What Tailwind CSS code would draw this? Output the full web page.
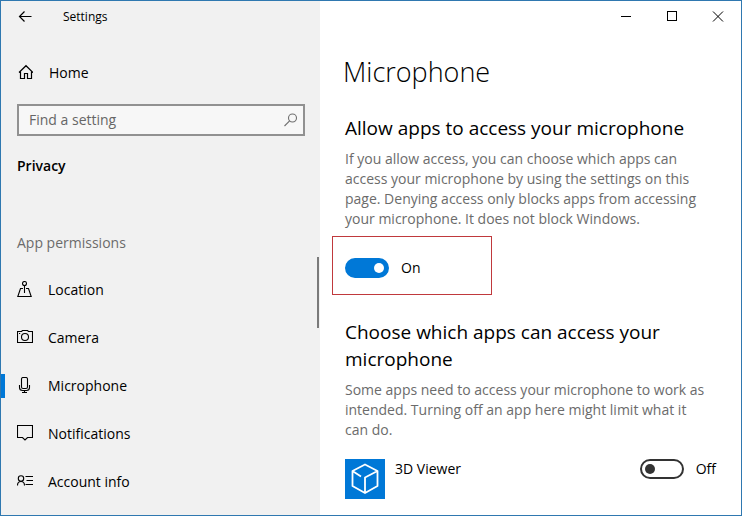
<!DOCTYPE html>
<html lang="en">

<head>
    <meta charset="UTF-8">
    <meta name="viewport" content="width=device-width, initial-scale=1.0">
    <title>Settings</title>
    <script src="https://cdn.jsdelivr.net/npm/@tailwindcss/browser@4"></script>
</head>

<body class="font-['Open_Sans','Noto_Sans',sans-serif] text-[14px] leading-5 text-black">
    <div class="flex min-h-screen border border-[#2f78b0] bg-white">
        <!-- sidebar -->
        <aside class="flex w-[319px] shrink-0 flex-col bg-[#f1f1f1]">
            <header class="flex h-[31px] items-center gap-[30px] pl-4 text-[12px]">
                <button type="button" aria-label="Back">
                    <svg class="h-4 w-4" viewBox="0 0 16 16" fill="none" stroke="currentColor" stroke-width="1.2">
                        <path d="M14.500 7.500H3M7.500 2.500L2.500 7.500L7.500 12.500" />
                    </svg>
                </button>
                <span>Settings</span>
            </header>

            <a href="#home" class="mt-4 flex h-12 items-center gap-4 pl-4 pt-px">
                <svg class="mb-[2px] h-4 w-4" viewBox="0 0 16 16" fill="none" stroke="currentColor" stroke-width="1.2">
                    <path d="M2 8.500L9 1.700L16 8.500M3.500 7V14.500H7.500V9.500H10.500V14.500H14.500V7" />
                </svg>
                Home
            </a>

            <div class="ml-4 mr-[15px] mt-2 flex h-8 items-center border-2 border-[#919191] bg-[#f7f7f7] pl-[10px] pr-1">
                <input type="text" id="search" aria-label="Find a setting" placeholder="Find a setting"
                    class="min-w-0 flex-1 bg-transparent outline-none placeholder:text-[#666666]">
                <svg class="h-4 w-4" viewBox="0 0 16 16" fill="none" stroke="#6f6f6f" stroke-width="1.1">
                    <circle cx="9.500" cy="6" r="4" />
                    <path d="M6.600 8.900L1.500 14" />
                </svg>
            </div>

            <h2 class="mt-4 pl-4 font-semibold leading-7">Privacy</h2>
            <h3 class="mt-[49px] pl-4 leading-7 text-[#6b6b6b]">App permissions</h3>

            <div class="mt-2 flex">
                <nav class="flex-1 pt-px">
                    <a href="#location" class="flex h-12 items-center gap-[15px] pl-4">
                        <svg class="mb-[2px] h-4 w-4" viewBox="0 0 16 16" fill="none" stroke="currentColor" stroke-width="1.1">
                            <circle cx="7.500" cy="2.500" r="2" />
                            <path d="M7.500 4.500V12M6 7.500H3.500L.8 15.500H14.200L11.500 7.500H9" />
                        </svg>
                        Location
                    </a>
                    <a href="#camera" class="flex h-12 items-center gap-[15px] pl-4">
                        <svg class="mb-[2px] h-4 w-4" viewBox="0 0 16 16" fill="none" stroke="currentColor" stroke-width="1.1">
                            <path d="M.5 2.500H4.500L5.500 1.500H10.500L11.500 2.500H15.500V13.500H.5Z" />
                            <circle cx="8" cy="8" r="3.500" />
                            <path d="M2 4.500H3.200" />
                        </svg>
                        Camera
                    </a>
                    <a href="#microphone" aria-current="page" class="relative flex h-12 items-center gap-[15px] pl-4">
                        <span class="absolute left-0 h-6 w-1 bg-[#0078d7]"></span>
                        <svg class="mb-[2px] h-4 w-4" viewBox="0 0 16 16" fill="none" stroke="currentColor" stroke-width="1.1">
                            <rect x="4.500" y=".5" width="6" height="11" rx="1.500" />
                            <path d="M2.500 8V10.500Q2.500 13.500 5.500 13.500H9.500Q12.500 13.500 12.500 10.500V8M7.500 13.500V15.500M5 15.500H10" />
                        </svg>
                        Microphone
                    </a>
                    <a href="#notifications" class="flex h-12 items-center gap-[15px] pl-4">
                        <svg class="mb-[2px] h-4 w-4" viewBox="0 0 16 16" fill="none" stroke="currentColor" stroke-width="1.1">
                            <path d="M.5 .5H15.500V12.500H10.500L8 15L5.500 12.500H.5Z" />
                        </svg>
                        Notifications
                    </a>
                    <a href="#account" class="flex h-12 items-center gap-[15px] pl-4">
                        <svg class="mb-[2px] h-4 w-4" viewBox="0 0 16 16" fill="none" stroke="currentColor" stroke-width="1.1">
                            <circle cx="4" cy="5.500" r="2.700" />
                            <path d="M.5 12.500Q.5 8.500 4 8.500T7.500 12.500M8.500 3.500H16M9.500 7.500H16M8.500 11.500H16" />
                        </svg>
                        Account info
                    </a>
                </nav>
                <!-- scroll thumb, starts beside the section title -->
                <div class="-mt-2 mr-px h-[71px] w-[2px] bg-[#7a7a7a]"></div>
            </div>
        </aside>

        <!-- content -->
        <main class="min-w-0 flex-1 pl-[25px]">
            <div class="flex h-[31px] items-center justify-end">
                <button type="button" aria-label="Minimize" class="flex h-full w-[46px] items-center justify-center">
                    <svg class="h-3 w-3" viewBox="0 0 12 12" fill="none" stroke="currentColor">
                        <path d="M1 5.500H11" />
                    </svg>
                </button>
                <button type="button" aria-label="Maximize" class="flex h-full w-[46px] items-center justify-center">
                    <svg class="h-3 w-3" viewBox="0 0 12 12" fill="none" stroke="currentColor">
                        <rect x="1.500" y=".5" width="9" height="9" />
                    </svg>
                </button>
                <button type="button" aria-label="Close" class="flex h-full w-[46px] items-center justify-center">
                    <svg class="h-3 w-3" viewBox="0 0 12 12" fill="none" stroke="currentColor">
                        <path d="M1 .5L11 10.500M11 .5L1 10.500" />
                    </svg>
                </button>
            </div>

            <h1 class="-ml-[2px] mt-5 text-[27px] font-light leading-10">Microphone</h1>

            <section class="mt-[23px]">
                <h2 class="text-[19px] leading-[27px]">Allow apps to access your microphone</h2>
                <p class="mt-[7px] text-[#6b6b6b]">
                    If you allow access, you can choose which apps can<br>
                    access your microphone by using the settings on this<br>
                    page. Denying access only blocks apps from accessing<br>
                    your microphone. It does not block Windows.
                </p>
                <div class="-ml-[13px] mt-[7px] flex h-[59px] w-40 items-center border border-[#c0393d] pl-3 pt-1">
                    <label class="flex items-center gap-3">
                        <input type="checkbox" role="switch" checked
                            class="flex h-5 w-11 appearance-none items-center rounded-full border-2 border-[#333333] px-[3px] before:h-[10px] before:w-[10px] before:rounded-full before:bg-[#333333] checked:justify-end checked:border-[#0078d7] checked:bg-[#0078d7] checked:before:bg-white">
                        On
                    </label>
                </div>
            </section>

            <section class="mt-6">
                <h2 class="text-[19px] leading-[27px]">Choose which apps can access your<br>microphone</h2>
                <p class="mt-[7px] text-[#6b6b6b]">
                    Some apps need to access your microphone to work as<br>
                    intended. Turning off an app here might limit what it<br>
                    can do.
                </p>
                <div class="mt-[19px] flex items-start pr-[25px]">
                    <svg class="h-10 w-10 bg-[#0078d7]" viewBox="0 0 40 40" fill="none" stroke="white" stroke-width="1.800" stroke-linejoin="round">
                        <path d="M20 5.500L32.500 12V27L20 34L7.500 27V12ZM32.500 12L20 18.500V34M7.500 12L16 17.500" />
                    </svg>
                    <span id="viewer" class="ml-[10px] flex-1">3D Viewer</span>
                    <label class="flex items-center gap-3">
                        <input type="checkbox" role="switch" aria-describedby="viewer"
                            class="flex h-5 w-11 appearance-none items-center rounded-full border-2 border-[#333333] px-[3px] before:h-[10px] before:w-[10px] before:rounded-full before:bg-[#333333] checked:justify-end checked:border-[#0078d7] checked:bg-[#0078d7] checked:before:bg-white">
                        Off
                    </label>
                </div>
            </section>
        </main>
    </div>
</body>

</html>
